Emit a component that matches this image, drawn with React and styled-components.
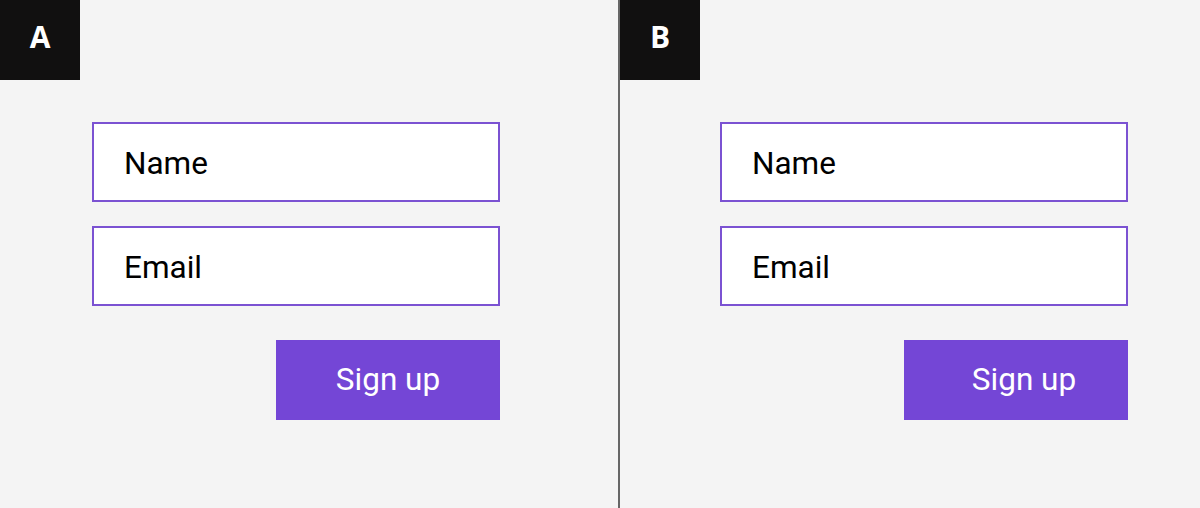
import React from "react";
import styled, { createGlobalStyle } from "styled-components";

const Global = createGlobalStyle`
  html, body { margin: 0; padding: 0; background: #f4f4f4; }
  body { font-family: Roboto, "Liberation Sans", sans-serif; }
`;

const Page = styled.div`
  display: flex;
  width: 1200px;
  height: 508px;
  background: #f4f4f4;
  overflow: hidden;
`;

const Panel = styled.section`
  position: relative;
  flex: ${(p) => (p.$grow ? "1" : "0 0 618px")};
  padding-top: 122px;
  padding-left: ${(p) => p.$inset}px;
  box-sizing: border-box;
`;

const Divider = styled.div`
  width: 2px;
  background: #666666;
`;

const Badge = styled.div`
  position: absolute;
  top: 0;
  left: 0;
  width: 80px;
  height: 80px;
  background: #111010;
  color: #fff;
  display: flex;
  align-items: center;
  justify-content: center;
  font-family: "Open Sans", sans-serif;
  font-weight: 700;
  font-size: 30px;
  padding-bottom: 8px;
  box-sizing: border-box;
`;

const Form = styled.form`
  width: 408px;
  display: flex;
  flex-direction: column;
  gap: 24px;
`;

const Field = styled.div`
  height: 80px;
  box-sizing: border-box;
  border: 2px solid #7b52d2;
  background: #fff;
  display: flex;
  align-items: center;
  padding-left: 30px;
  padding-top: 2px;
  font-size: 31.5px;
  color: #000;
`;

const Actions = styled.div`
  display: flex;
  justify-content: flex-end;
  margin-top: 10px;
`;

const Button = styled.div`
  width: 224px;
  height: 80px;
  box-sizing: border-box;
  background: #7446d6;
  color: #fff;
  display: flex;
  align-items: center;
  justify-content: center;
  padding-left: ${(p) => p.$shift}px;
  font-size: 31.5px;
  padding-bottom: 2px;
`;

const Variant = ({ letter, inset, shift, grow }) => (
  <Panel $inset={inset} $grow={grow}>
    <Badge>{letter}</Badge>
    <Form>
      <Field>Name</Field>
      <Field>Email</Field>
      <Actions>
        <Button $shift={shift}>Sign up</Button>
      </Actions>
    </Form>
  </Panel>
);

export default function App() {
  return (
    <>
      <Global />
      <Page>
        <Variant letter="A" inset={92} shift={0} />
        <Divider />
        <Variant letter="B" inset={100} shift={16} grow />
      </Page>
    </>
  );
}
